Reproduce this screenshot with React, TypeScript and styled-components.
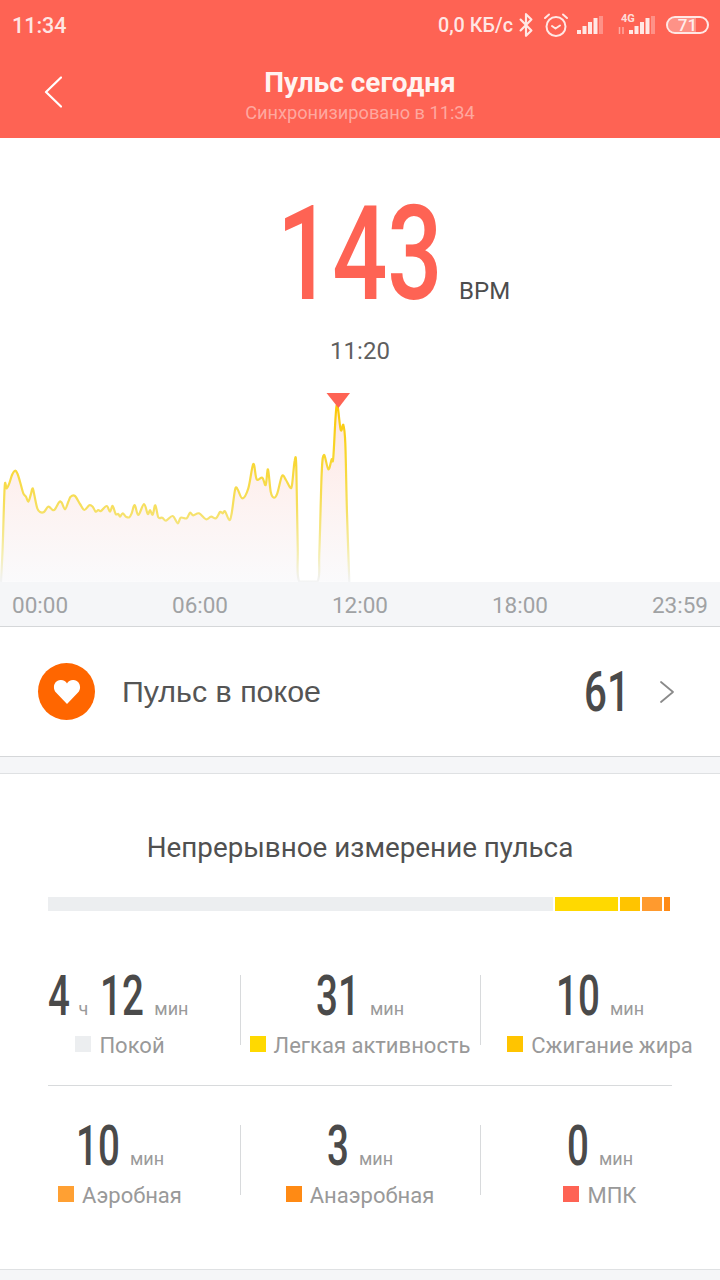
import React from "react";
import styled, { createGlobalStyle } from "styled-components";
import { Bluetooth } from "lucide-react";

const Global = createGlobalStyle`
  html, body { margin: 0; padding: 0; background: #fff; }
  body { font-family: Roboto, "Noto Sans", sans-serif; }
`;

const Page = styled.div`
  width: 720px;
  height: 1280px;
  overflow: hidden;
  display: flex;
  flex-direction: column;
  background: #f5f6f8;
`;

const Top = styled.header`
  height: 138px;
  flex: none;
  background: #fe6354;
  color: #fff;
  display: flex;
  flex-direction: column;
`;

const StatusBar = styled.div`
  height: 50px;
  padding: 0 11px 0 12px;
  display: flex;
  align-items: center;
  justify-content: space-between;
  color: rgba(255, 255, 255, 0.85);
`;

const Clock = styled.span`
  font-size: 21.5px;
  font-weight: 500;
`;

const StatusIcons = styled.div`
  display: flex;
  align-items: center;
`;

const Speed = styled.span`
  font-size: 19.8px;
  font-weight: 500;
  white-space: nowrap;
`;

const IconGap = styled.span<{ $w: number }>`
  width: ${(p) => p.$w}px;
  flex: none;
`;

const Battery = styled.div`
  width: 39px;
  height: 14px;
  border: 2px solid rgba(255, 255, 255, 0.85);
  border-radius: 10px;
  font-size: 17px;
  font-weight: 500;
  line-height: 14px;
  text-align: center;
  background: linear-gradient(90deg, rgba(255, 255, 255, 0.3) 71%, transparent 71%);
  background-clip: padding-box;
`;

const NavBar = styled.div`
  flex: 1;
  display: grid;
  grid-template-columns: 96px 1fr 96px;
  align-items: center;
`;

const BackButton = styled.div`
  padding-left: 44px;
  display: flex;
  margin-top: -4px;
`;

const NavTitles = styled.div`
  text-align: center;
`;

const NavTitle = styled.div`
  font-size: 28px;
  font-weight: 700;
  line-height: 36px;
  margin-top: 2px;
  color: #fff3f1;
`;

const NavSub = styled.div`
  font-size: 18.2px;
  line-height: 24px;
  color: rgba(255, 255, 255, 0.45);
`;

const Hero = styled.section`
  height: 444px;
  flex: none;
  background: #fff;
  display: flex;
  flex-direction: column;
`;

const ReadingRow = styled.div`
  display: grid;
  grid-template-columns: 1fr auto 1fr;
  align-items: end;
  height: 185px;
  box-sizing: border-box;
`;

const Num = styled.span<{ $size: number; $weight?: number; $color?: string; $chars: number; $scale?: number }>`
  display: inline-block;
  font-size: ${(p) => p.$size}px;
  font-weight: ${(p) => p.$weight ?? 400};
  color: ${(p) => p.$color ?? "#4a4a4a"};
  line-height: 1;
  transform: scaleX(${(p) => p.$scale ?? 0.7});
  transform-origin: left center;
  margin-right: ${(p) => -(1 - (p.$scale ?? 0.7)) * 0.5615 * p.$chars * p.$size}px;
`;

const Reading = styled.div`
  grid-column: 2;
  line-height: 1;
  padding-bottom: 3px;
`;

const Bpm = styled.span`
  font-size: 24px;
  color: #4d4d4d;
  padding: 0 0 18px 16px;
`;

const TimeLabel = styled.div`
  text-align: center;
  font-size: 24px;
  line-height: 30px;
  color: #5f5f5f;
  margin-top: 13px;
`;

const ChartBox = styled.div`
  position: relative;
  flex: 1;
  min-height: 0;
  overflow: hidden;
`;

const ChartSvg = styled.svg`
  display: block;
  position: absolute;
  left: 0;
  top: 0;
`;

const Axis = styled.div`
  height: 45px;
  flex: none;
  box-sizing: border-box;
  padding: 2px 12px 0;
  display: flex;
  align-items: center;
  justify-content: space-between;
  font-size: 22.5px;
  color: #a0a2a4;
  background: #f5f6f8;
  border-bottom: 1px solid #d5d7d9;
`;

const RestRow = styled.section`
  height: 130px;
  flex: none;
  box-sizing: border-box;
  padding: 0 45px 0 38px;
  background: #fff;
  display: flex;
  align-items: center;
  border-bottom: 1px solid #d5d7d9;
`;

const RestBadge = styled.div`
  width: 57px;
  height: 57px;
  border-radius: 50%;
  background: #ff6600;
  display: flex;
  align-items: center;
  justify-content: center;
  flex: none;
`;

const RestLabel = styled.span`
  font-size: 30.4px;
  color: #555;
  margin-left: 27px;
  flex: 1;
  font-family: "Liberation Sans", Roboto, sans-serif;
`;

const RestValue = styled.span`
  margin-right: 29px;
`;

const Gap = styled.div`
  height: 16px;
  flex: none;
`;

const Card = styled.section`
  height: 497px;
  flex: none;
  background: #fff;
  border-top: 1px solid #dfe1e3;
  border-bottom: 1px solid #dfe1e3;
  box-sizing: border-box;
  display: flex;
  flex-direction: column;
`;

const CardTitle = styled.h2`
  margin: 0;
  padding-top: 57px;
  text-align: center;
  font-size: 27.8px;
  line-height: 34px;
  font-weight: 400;
  color: #505050;
`;

const ZoneBar = styled.div`
  margin: 32px 50px 0 48px;
  height: 14px;
  display: flex;
  gap: 2px;
`;

const ZoneSeg = styled.div<{ $grow: number; $color: string }>`
  width: ${(p) => p.$grow}px;
  flex: none;
  background: ${(p) => p.$color};
`;

const StatGrid = styled.div<{ $top: number }>`
  margin-top: ${(p) => p.$top}px;
  display: grid;
  grid-template-columns: repeat(3, 240px);
`;

const Stat = styled.div<{ $first: boolean }>`
  height: 70px;
  display: flex;
  flex-direction: column;
  align-items: center;
  box-sizing: border-box;
  box-shadow: ${(p) => (p.$first ? "none" : "inset 1px 0 0 #d8dadc")};
`;

const StatValue = styled.div<{ $nudge: number }>`
  display: flex;
  align-items: baseline;
  height: 44px;
  margin-top: -6px;
  margin-right: ${(p) => p.$nudge}px;
  white-space: nowrap;
`;

const Unit = styled.span<{ $gap: number }>`
  font-size: 18px;
  color: #9a9a9a;
  margin: 0 0 0 ${(p) => p.$gap}px;
`;

const NextPart = styled.span`
  display: inline-flex;
  align-items: baseline;
  margin-left: 12px;
`;

const Legend = styled.div`
  margin-top: 19px;
  display: flex;
  align-items: center;
  gap: 8px;
  font-size: 22px;
  line-height: 28px;
  color: #999;
  white-space: nowrap;
`;

const Swatch = styled.i<{ $color: string }>`
  display: block;
  width: 16px;
  height: 16px;
  margin-top: -4px;
  background: ${(p) => p.$color};
`;

const Rule = styled.div`
  margin: 40px 48px 39px;
  height: 1px;
  background: #d8dadc;
`;

const Foot = styled.div`
  flex: 1;
  background: #f5f6f8;
`;

const raw: [number, number][] = [
  [3,605],[8,500],[14,320],[20,325],[28,310],[36,285],[45,272],[52,280],[60,305],[70,340],[78,350],[85,365],[92,345],[98,325],[104,350],[112,385],[120,396],[132,396],[145,380],[158,390],[165,388],[178,366],[185,368],[195,388],[205,365],[212,350],[225,348],[240,372],[253,390],[268,376],[278,380],[287,395],[295,390],[303,393],[320,378],[330,395],[338,378],[347,402],[355,402],[360,410],[368,400],[378,410],[388,412],[395,400],[404,375],[415,405],[432,372],[443,402],[450,390],[458,404],[466,376],[475,412],[487,413],[498,422],[518,408],[533,430],[542,413],[560,415],[570,398],[580,406],[597,400],[618,418],[633,410],[648,415],[660,396],[668,400],[675,394],[688,420],[695,400],[705,330],[712,326],[727,355],[745,325],[760,252],[770,298],[787,293],[797,315],[804,268],[812,335],[822,353],[832,340],[846,288],[858,300],[870,322],[876,315],[884,242],[889,260],[893,500],[898,605],[952,605],[958,520],[965,280],[972,225],[985,268],[995,238],[1000,232],[1010,75],[1022,150],[1030,135],[1036,190],[1041,400],[1048,605],
];
// Zoom coordinates of the reference -> chart-box coordinates (box top is at y=366 on the page).
const BASE = 605 / 3 + 14;
const pts = raw.map(([x, y]) => [x / 3, y / 3 + 380 - 366] as const);
const f = (n: number) => n.toFixed(1);
const smooth = (p: readonly (readonly [number, number])[]) => {
  let d = `M${f(p[0][0])} ${f(p[0][1])}`;
  for (let i = 0; i < p.length - 1; i++) {
    const a = p[Math.max(i - 1, 0)];
    const b = p[i];
    const c = p[i + 1];
    const e = p[Math.min(i + 2, p.length - 1)];
    const c1x = b[0] + (c[0] - a[0]) / 6;
    const c1y = Math.min(b[1] + (c[1] - a[1]) / 6, BASE);
    const c2x = c[0] - (e[0] - b[0]) / 6;
    const c2y = Math.min(c[1] - (e[1] - b[1]) / 6, BASE);
    d += `C${f(c1x)} ${f(c1y)} ${f(c2x)} ${f(c2y)} ${f(c[0])} ${f(c[1])}`;
  }
  return d;
};
const line = smooth(pts);

const Chart = () => (
  <ChartSvg width="720" height="216" viewBox="0 0 720 216">
    <defs>
      <linearGradient id="fillG" gradientUnits="userSpaceOnUse" x1="0" y1="40" x2="0" y2="216">
        <stop offset="0" stopColor="#fde3df" stopOpacity="0.9" />
        <stop offset="0.5" stopColor="#fdeeec" stopOpacity="0.8" />
        <stop offset="1" stopColor="#f8f8fa" stopOpacity="0.7" />
      </linearGradient>
      <linearGradient id="lineG" gradientUnits="userSpaceOnUse" x1="0" y1="30" x2="0" y2="216">
        <stop offset="0" stopColor="#fcc400" />
        <stop offset="0.3" stopColor="#f8d52a" />
        <stop offset="0.6" stopColor="#f6df60" />
        <stop offset="0.85" stopColor="#f5eeb0" />
        <stop offset="0.98" stopColor="#f1f1ee" />
        <stop offset="1" stopColor="#f3f4f5" />
      </linearGradient>
    </defs>
    <path d={line + "Z"} fill="url(#fillG)" />
    <path d={line} fill="none" stroke="url(#lineG)" strokeWidth="2.2" strokeLinejoin="round" strokeLinecap="round" />
    <polygon points="326.5,27 350,27 338.5,42" fill="#fe6354" />
  </ChartSvg>
);

const Alarm = () => (
  <svg width="26" height="26" viewBox="0 0 26 26" fill="none" stroke="rgba(255,255,255,.85)" strokeWidth="2" strokeLinecap="round" strokeLinejoin="round">
    <circle cx="13" cy="14.5" r="9.5" />
    <path d="M9 14l3.500 2.500L17 13.500" />
    <path d="M2 6l4-3.500M24 6l-4-3.500" />
  </svg>
);

const Signal = ({ net }: { net?: boolean }) => (
  <svg width={net ? 37 : 26} height="24" viewBox={net ? "-11 0 37 24" : "0 0 26 24"} fill="rgba(255,255,255,.85)">
    <rect x="0" y="17" width="4" height="4" />
    <rect x="5.500" y="13" width="4" height="8" />
    <rect x="11" y="9" width="4" height="12" />
    <rect x="16.500" y="5" width="4" height="16" />
    <rect x="22" y="3" width="4" height="18" opacity=".35" />
    {net && <text x="-8" y="9" fontSize="11" fontWeight="700" fontFamily="Roboto" fill="rgba(255,255,255,.8)">4G</text>}
    {net && <path d="M-9.500 14v7M-6 14v7" stroke="rgba(255,255,255,.45)" strokeWidth="1.5" />}
  </svg>
);

const BackChevron = () => (
  <svg width="18" height="32" viewBox="0 0 18 32" fill="none" stroke="#fff" strokeWidth="2.200" strokeLinecap="round" strokeLinejoin="round">
    <path d="M17 1.500L2 16l15 14.500" />
  </svg>
);

const RowChevron = () => (
  <svg width="16" height="24" viewBox="0 0 16 24" fill="none" stroke="#8a8a8a" strokeWidth="1.800" strokeLinecap="round" strokeLinejoin="round">
    <path d="M2 2l12 10L2 22" />
  </svg>
);

const Heart = () => (
  <svg width="28" height="26" viewBox="0 0 28 26">
    <path d="M14 25 L3 13.500 C-1 9 1 1.500 7.500 1 C10.500 .8 12.800 2.300 14 4.500 C15.200 2.300 17.500 .8 20.500 1 C27 1.500 29 9 25 13.500 Z" fill="#fff" />
  </svg>
);

type S = { parts: [string, string][]; label: string; color: string };
const stats: S[] = [
  { parts: [["4", "ч"], ["12", "мин"]], label: "Покой", color: "#eceef0" },
  { parts: [["31", "мин"]], label: "Легкая активность", color: "#ffd900" },
  { parts: [["10", "мин"]], label: "Сжигание жира", color: "#ffc400" },
  { parts: [["10", "мин"]], label: "Аэробная", color: "#ffa033" },
  { parts: [["3", "мин"]], label: "Анаэробная", color: "#ff8a14" },
  { parts: [["0", "мин"]], label: "МПК", color: "#fe6354" },
];

const zones: [number, string][] = [
  [505, "#eceef0"],
  [63, "#ffd900"],
  [20, "#ffc400"],
  [20, "#ff9a2e"],
  [6, "#ff8a14"],
];

const StatCell = ({ s, i }: { s: S; i: number }) => (
  <Stat $first={i % 3 === 0}>
    <StatValue $nudge={s.parts.length > 1 ? 4 : 0}>
      {s.parts.map(([n, u], k) => {
        const part = (
          <>
            <Num $size={55} $weight={500} $chars={n.length}>{n}</Num>
            <Unit $gap={k === 0 && s.parts.length > 1 ? 9 : 10}>{u}</Unit>
          </>
        );
        return k ? <NextPart key={k}>{part}</NextPart> : <React.Fragment key={k}>{part}</React.Fragment>;
      })}
    </StatValue>
    <Legend>
      <Swatch $color={s.color} />
      {s.label}
    </Legend>
  </Stat>
);

export default function App() {
  return (
    <Page>
      <Global />
      <Top>
        <StatusBar>
          <Clock>11:34</Clock>
          <StatusIcons>
            <Speed>0,0 КБ/с</Speed>
            <Bluetooth size={26} strokeWidth={2} />
            <IconGap $w={4} />
            <Alarm />
            <IconGap $w={8} />
            <Signal />
            <IconGap $w={15} />
            <Signal net />
            <IconGap $w={11} />
            <Battery>71</Battery>
          </StatusIcons>
        </StatusBar>
        <NavBar>
          <BackButton>
            <BackChevron />
          </BackButton>
          <NavTitles>
            <NavTitle>Пульс сегодня</NavTitle>
            <NavSub>Синхронизировано в 11:34</NavSub>
          </NavTitles>
        </NavBar>
      </Top>
      <Hero>
        <ReadingRow>
          <Reading>
            <Num $size={132} $weight={500} $color="#fe6354" $chars={3} $scale={0.735}>143</Num>
          </Reading>
          <Bpm>BPM</Bpm>
        </ReadingRow>
        <TimeLabel>11:20</TimeLabel>
        <ChartBox>
          <Chart />
        </ChartBox>
      </Hero>
      <Axis>
        <span>00:00</span>
        <span>06:00</span>
        <span>12:00</span>
        <span>18:00</span>
        <span>23:59</span>
      </Axis>
      <RestRow>
        <RestBadge>
          <Heart />
        </RestBadge>
        <RestLabel>Пульс в покое</RestLabel>
        <RestValue>
          <Num $size={56} $weight={500} $chars={2} $scale={0.72}>61</Num>
        </RestValue>
        <RowChevron />
      </RestRow>
      <Gap />
      <Card>
        <CardTitle>Непрерывное измерение пульса</CardTitle>
        <ZoneBar>
          {zones.map(([w, c], i) => (
            <ZoneSeg key={i} $grow={w} $color={c} />
          ))}
        </ZoneBar>
        <StatGrid $top={64}>
          {stats.slice(0, 3).map((s, i) => (
            <StatCell key={i} s={s} i={i} />
          ))}
        </StatGrid>
        <Rule />
        <StatGrid $top={0}>
          {stats.slice(3).map((s, i) => (
            <StatCell key={i} s={s} i={i} />
          ))}
        </StatGrid>
      </Card>
      <Foot />
    </Page>
  );
}
